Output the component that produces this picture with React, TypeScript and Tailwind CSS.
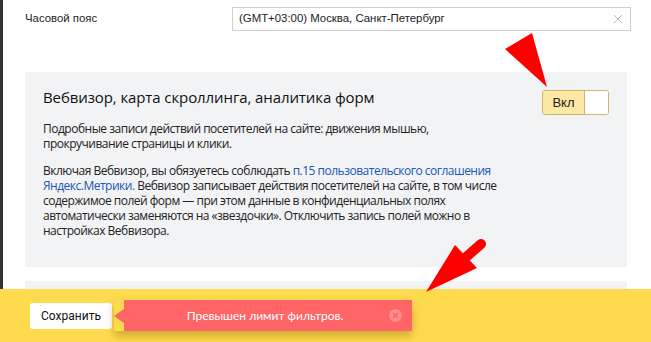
import React from "react";

export default function App() {
  return (
    <div className="relative w-[651px] h-[342px] overflow-hidden bg-white flex flex-col">
      <div className="flex h-[289px] overflow-hidden">
        <div className="w-[3px] shrink-0 bg-[#333333]" />
        <div className="flex-1 flex flex-col">
          <div className="flex items-center h-[31px] pt-[7px] pl-[22px] pr-[20px]">
            <div className="w-[207px] text-[11.4px] text-[#222] font-['Liberation_Sans',sans-serif] leading-none">
              Часовой пояс
            </div>
            <div className="flex-1 h-[24px] border border-[#cfcfcf] flex items-center justify-between pl-[6px] pr-[6px]">
              <span className="text-[11.4px] text-[#222] font-['Liberation_Sans',sans-serif]">
                (GMT+03:00) Москва, Санкт-Петербург
              </span>
              <svg width="10" height="10" viewBox="0 0 10 10" className="mr-[1px]">
                <path d="M1 1L9 9M9 1L1 9" stroke="#b8b8b8" strokeWidth="1" />
              </svg>
            </div>
          </div>

          <div className="mt-[41px] ml-[22px] mr-[24px] bg-[#f2f3f5] pt-[15px] pl-[18px] pr-[18px] pb-[29px] font-['Open_Sans',sans-serif]">
            <div className="flex justify-between items-start">
              <div className="text-[15px] leading-[20px] text-[#111] tracking-[-0.1px]">
                Вебвизор, карта скроллинга, аналитика форм
              </div>
              <div className="mt-[3px] flex h-[25px] rounded-[3px] border border-[#cbb66f] overflow-hidden">
                <div className="w-[42px] bg-[#fde9a4] flex items-center justify-center text-[13px] text-[#222] border-r border-[#cbb66f] font-['Liberation_Sans',sans-serif]">
                  Вкл
                </div>
                <div className="w-[23px] bg-white" />
              </div>
            </div>
            <div className="mt-[6px] text-[12px] leading-[15px] text-[#222] tracking-[-0.5px]">
              Подробные записи действий посетителей на сайте: движения мышью,
              <br />
              прокручивание страницы и клики.
            </div>
            <div className="mt-[12px] text-[12px] leading-[15px] text-[#222] tracking-[-0.5px]">
              Включая Вебвизор, вы обязуетесь соблюдать{" "}
              <span className="text-[#2056b8]">п.15 пользовательского соглашения</span>
              <br />
              <span className="text-[#2056b8]">Яндекс.Метрики.</span> Вебвизор записывает действия посетителей на сайте, в том числе
              <br />
              содержимое полей форм — при этом данные в конфиденциальных полях
              <br />
              автоматически заменяются на «звездочки». Отключить запись полей можно в
              <br />
              настройках Вебвизора.
            </div>
          </div>

          <div className="mt-[14px] ml-[22px] mr-[24px] h-[40px] shrink-0 bg-[#f2f3f5]" />
        </div>
      </div>

      <div className="h-[53px] bg-[#fedb4e] flex items-start pt-[11px] pl-[30px]">
        <div className="mt-[3px] h-[26px] w-[82px] bg-white rounded-[3px] flex items-center justify-center text-[12px] text-[#111] font-['Roboto',sans-serif]">
          Сохранить
        </div>
        <div className="ml-[2px] flex items-center h-[31px] shadow-[0_5px_8px_rgba(120,80,0,0.35)]">
          <div className="w-0 h-0 border-y-[7px] border-y-transparent border-r-[10px] border-r-[#ff6467]" />
          <div className="w-[288px] h-[31px] bg-[#ff6467] flex items-center relative">
            <div className="flex-1 text-center text-[12px] text-white font-['Lato',sans-serif] pr-[6px]">
              Превышен лимит фильтров.
            </div>
            <svg width="13" height="13" viewBox="0 0 13 13" className="absolute right-[10px] top-[9px]">
              <circle cx="6.5" cy="6.5" r="6.5" fill="#ff8e90" />
              <path d="M4 4L9 9M9 4L4 9" stroke="#ff6467" strokeWidth="1.6" />
            </svg>
          </div>
        </div>
      </div>

      <svg className="absolute left-0 top-0 pointer-events-none" width="651" height="342" viewBox="0 0 651 342">
        <polygon points="505,49 532,33 547,87" fill="#ff0000" />
        <line x1="481" y1="244" x2="465" y2="258" stroke="#ff0000" strokeWidth="10" strokeLinecap="round" />
        <polygon points="455,245 477,268 426,292" fill="#ff0000" />
      </svg>
    </div>
  );
}
